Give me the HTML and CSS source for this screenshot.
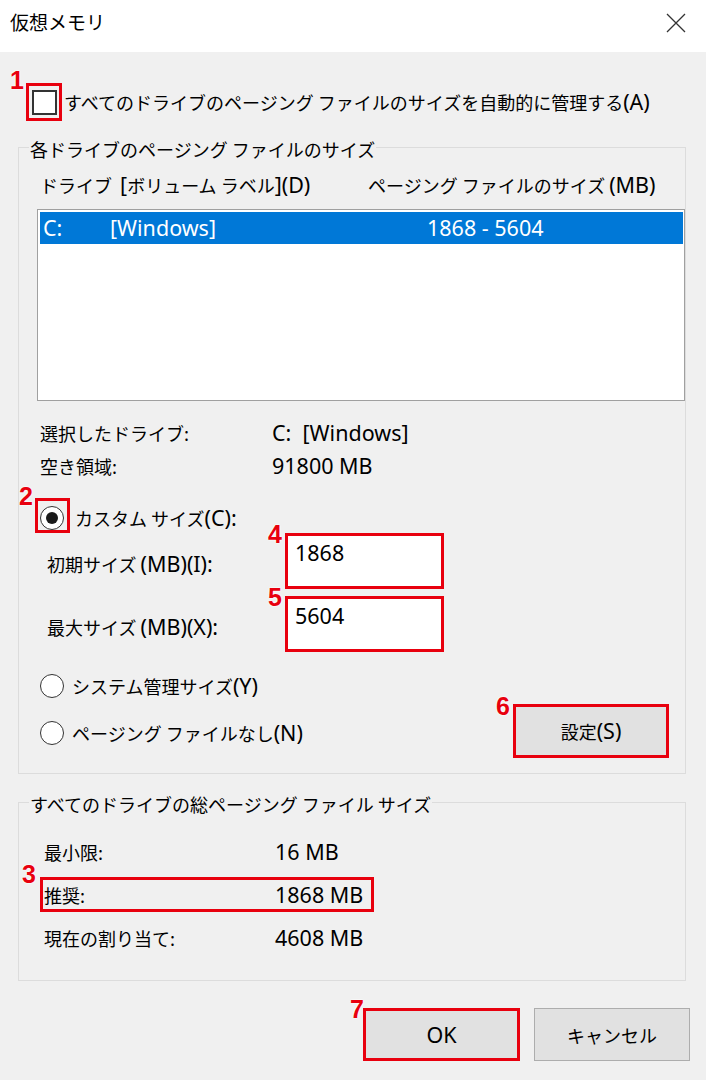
FILE: index.html
```html
<!DOCTYPE html>
<html lang="ja">

<head>
  <meta charset="UTF-8">
  <meta name="viewport" content="width=device-width, initial-scale=1.0">
  <title>仮想メモリ</title>
  <link rel="stylesheet" href="styles.css">
</head>

<body>
  <!-- Title bar -->
  <div class="titlebar">
    <span class="title">仮想メモリ</span>
    <svg class="close" width="20" height="20" viewBox="0 0 20 20">
      <path d="M1 1L19 19M19 1L1 19" stroke="#333" stroke-width="1.3" fill="none" />
    </svg>
  </div>

  <div class="dialog">
    <div class="auto-row">
      <span class="mark mark-check"><span class="num num-1">1</span><span class="checkbox"></span></span>
      <span>すべてのドライブのページング ファイルのサイズを自動的に管理する<span class="lt">(A)</span></span>
    </div>

    <!-- Per drive -->
    <fieldset class="group group-drives">
      <legend>各ドライブのページング ファイルのサイズ</legend>
      <div class="list-head">
        <span>ドライブ&nbsp;&nbsp;<span class="lt">[</span>ボリューム ラベル<span class="lt">](D)</span></span>
        <span>ページング ファイルのサイズ <span class="lt">(MB)</span></span>
      </div>
      <div class="listbox">
        <div class="list-row selected lt"><span>C:</span><span>[Windows]</span><span>1868 - 5604</span></div>
      </div>

      <div class="info-row info-first"><span>選択したドライブ:</span><span><span class="lt">C:&nbsp;&nbsp;[Windows]</span></span></div>
      <div class="info-row"><span>空き領域:</span><span><span class="lt">91800 MB</span></span></div>

      <div class="radio-row custom-row">
        <span class="mark mark-radio"><span class="num num-2">2</span><span class="radio checked"></span></span>
        <span class="custom-label">カスタム サイズ<span class="lt">(C):</span></span>
      </div>

      <div class="size-row">
        <span class="size-label">初期サイズ <span class="lt">(MB)(I):</span></span>
        <span class="size-input lt"><span class="num num-4">4</span>1868</span>
      </div>
      <div class="size-row size-row-max">
        <span class="size-label">最大サイズ <span class="lt">(MB)(X):</span></span>
        <span class="size-input lt"><span class="num num-5">5</span>5604</span>
      </div>

      <div class="options">
        <div class="radio-list">
          <div class="radio-row"><span class="radio"></span><span>システム管理サイズ<span class="lt">(Y)</span></span></div>
          <div class="radio-row"><span class="radio"></span><span>ページング ファイルなし<span class="lt">(N)</span></span></div>
        </div>
        <button class="btn btn-set flagged"><span class="num num-6">6</span>設定<span class="lt">(S)</span></button>
      </div>
    </fieldset>

    <!-- Totals -->
    <fieldset class="group group-total">
      <legend>すべてのドライブの総ページング ファイル サイズ</legend>
      <div class="stats">
        <div class="stat"><span>最小限:</span><span><span class="lt">16 MB</span></span></div>
        <div class="stat flagged"><span class="num num-3">3</span><span>推奨:</span><span><span class="lt">1868 MB</span></span></div>
        <div class="stat"><span>現在の割り当て:</span><span><span class="lt">4608 MB</span></span></div>
      </div>
    </fieldset>

    <div class="footer">
      <button class="btn flagged"><span class="num num-7">7</span><span class="lt">OK</span></button>
      <button class="btn">キャンセル</button>
    </div>
  </div>
</body>

</html>
```

FILE: styles.css
```css
body {
  margin: 0;
  width: 706px;
  height: 1080px;
  background: #f0f0f0;
  font-family: "Noto Sans CJK JP", "Noto Sans", sans-serif;
  font-size: 18px;
  color: #000;
  overflow: hidden;
}

/* latin runs are drawn larger, like the UI font does */
.lt {
  font-family: "Noto Sans", "Noto Sans CJK JP", sans-serif;
  font-size: 21.5px;
}

span.lt {
  line-height: 1;
}

.titlebar {
  height: 52px;
  background: #fff;
  display: flex;
  justify-content: space-between;
  align-items: flex-start;
}

.title {
  padding-left: 10px;
  font-size: 19px;
  line-height: 44px;
}

.close {
  margin: 13px 20px 0 0;
}

.dialog {
  padding-left: 18px;
}

/* Red annotations */
.flagged,
.mark {
  border: 3px solid #e8000e;
}

.num {
  position: absolute;
  font-family: "Liberation Sans", Arial, sans-serif;
  font-weight: bold;
  font-size: 25px;
  line-height: 25px;
  color: #e8000e;
  text-shadow: 0 0 2px #fff, 0 0 2px #fff;
}

.num-1 { top: -18px; right: calc(100% + 5px); }
.num-2 { top: -17px; right: calc(100% + 5px); }
.num-3 { top: -18px; right: calc(100% + 7px); }
.num-4 { top: -14px; right: calc(100% + 6px); }
.num-5 { top: -14px; right: calc(100% + 6px); }
.num-6 { top: -13px; right: calc(100% + 6px); }
.num-7 { top: -14px; right: calc(100% + 2px); }

.mark {
  position: relative;
  box-sizing: border-box;
  display: flex;
}

.auto-row {
  margin-top: 31px;
  display: flex;
  align-items: center;
  gap: 2px;
}

.mark-check {
  width: 36px;
  height: 38px;
  margin-left: 8px;
  align-items: center;
  justify-content: center;
}

.checkbox {
  width: 25px;
  height: 25px;
  box-sizing: border-box;
  border: 2px solid #333;
  background: #fff;
}

/* Group boxes */
.group {
  margin: 12px 20px 0 0;
  padding: 0 0 15px 0;
  border: 1px solid #dcdcdc;
  min-width: 0;
}

.group legend {
  margin-left: 10px;
  padding: 4px 1px 0;
  line-height: 24px;
}

.list-head {
  margin-top: 12px;
  padding-left: 21px;
  display: grid;
  grid-template-columns: 328px auto;
  line-height: 24px;
}

.listbox {
  margin: 12px 0 0 18px;
  height: 192px;
  box-sizing: border-box;
  border: 1px solid #a0a0a0;
  background: #fff;
  padding: 2px 1px 0 2px;
}

.list-row {
  height: 32px;
  line-height: 32px;
  padding-left: 3px;
  display: grid;
  grid-template-columns: 67px 317px auto;
}

.list-row.selected {
  background: #0078d7;
  color: #fff;
}

.info-row {
  height: 33px;
  line-height: 33px;
  padding-left: 21px;
  display: grid;
  grid-template-columns: 232px auto;
}

.info-first {
  margin-top: 16px;
}

/* Radios */
.radio-row {
  display: flex;
  align-items: center;
  gap: 8px;
  height: 30px;
}

.custom-row {
  margin: 15px 0 0 16px;
  height: 35px;
  gap: 5px;
}

.custom-label {
  padding-top: 4px;
}

.mark-radio {
  width: 35px;
  height: 35px;
  padding: 5px 0 0 2px;
}

.radio {
  position: relative;
  width: 24px;
  height: 24px;
  box-sizing: border-box;
  border: 1.5px solid #333;
  border-radius: 50%;
  background: #fff;
  flex-shrink: 0;
}

.radio.checked::after {
  content: "";
  position: absolute;
  left: 4.5px;
  top: 4.5px;
  width: 12px;
  height: 12px;
  border-radius: 50%;
  background: #1a1a1a;
}

/* Size inputs */
.size-row {
  display: grid;
  grid-template-columns: 238px 159px;
  padding-left: 28px;
  height: 56px;
}

.size-row-max {
  margin-top: 7px;
}

.size-label {
  align-self: center;
  padding-top: 5px;
  line-height: 24px;
}

.size-input {
  position: relative;
  box-sizing: border-box;
  border: 3px solid #e8000e;
  background: #fff;
  padding: 6px 0 0 7px;
  line-height: 24px;
}

.options {
  margin-top: 19px;
  display: flex;
  justify-content: space-between;
  align-items: flex-end;
}

.radio-list {
  padding: 0 0 10px 21px;
  display: flex;
  flex-direction: column;
  gap: 17px;
}

/* Buttons */
.btn {
  position: relative;
  width: 156px;
  height: 53px;
  box-sizing: border-box;
  background: #e1e1e1;
  border: 1px solid #adadad;
  font-family: "Noto Sans CJK JP", "Noto Sans", sans-serif;
  font-size: 18px;
  color: #000;
  padding: 0;
}

.btn.flagged {
  border: 3px solid #e8000e;
}

.btn-set {
  height: 54px;
  margin-right: 16px;
}

/* Totals */
.group-total {
  margin-top: 14px;
  padding-bottom: 25px;
}

.stats {
  padding: 18px 0 0 21px;
  display: flex;
  flex-direction: column;
  gap: 8px;
}

.stat {
  position: relative;
  width: 334px;
  height: 35px;
  box-sizing: border-box;
  border: 3px solid transparent;
  padding-left: 1px;
  display: grid;
  grid-template-columns: 231px auto;
  align-items: center;
  line-height: 24px;
}

.stat.flagged {
  border-color: #e8000e;
}

.footer {
  margin-top: 27px;
  padding-right: 16px;
  display: flex;
  justify-content: flex-end;
  gap: 14px;
}

.footer .btn {
  width: 157px;
}

.footer .btn + .btn {
  width: 156px;
}
```
